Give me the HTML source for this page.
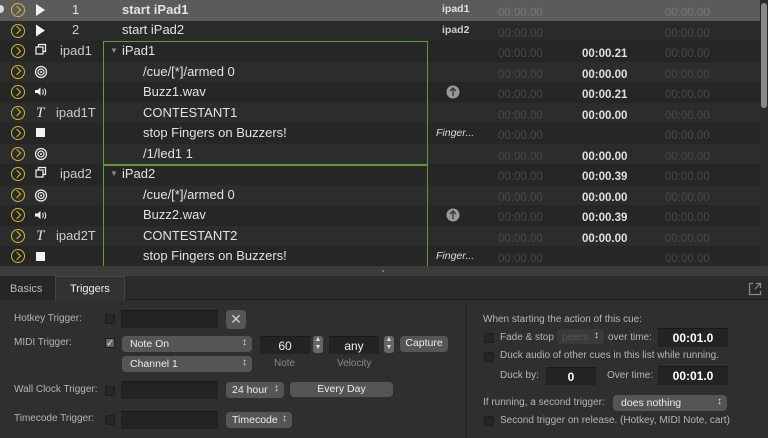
<!DOCTYPE html>
<html><head><style>
*{margin:0;padding:0;box-sizing:border-box}
body{width:768px;height:438px;overflow:hidden;background:#2f2f2f;font-family:"Liberation Sans",sans-serif;position:relative}
.a{position:absolute;white-space:nowrap}
.row{position:absolute;left:0;width:760px;height:20.5px}
.t{color:#e2e2e2;font-size:13px}
.d{color:#484848;font-size:11.5px}
.b{color:#e0e0e0;font-size:11.5px;font-weight:bold}
.l{color:#b5b5b5;font-size:10px}
.cb{position:absolute;width:10px;height:10px;background:#262626;border:1px solid #1c1c1c;border-radius:2px}
.fld{position:absolute;background:#232323;border-top:1px solid #1a1a1a}
.pop{position:absolute;background:#555;border-radius:4px;color:#eee;font-size:10.5px;padding:2px 0 0 8px;height:16px}
.pop:after{content:"\2195";position:absolute;right:5px;top:1px;font-size:10px;color:#ddd}
.btn{position:absolute;background:#555;border-radius:4px;color:#eee;font-size:10.5px;text-align:center;padding-top:2px;height:17px}
.go{position:absolute;left:11px;width:14px;height:14px;border:1.5px solid #c9b936;border-radius:50%}
.go:after{content:"";position:absolute;left:2px;top:2.5px;width:5px;height:5px;border-right:1.5px solid #c9b936;border-bottom:1.5px solid #c9b936;transform:rotate(-45deg)}
</style></head><body>
<div class="a" style="left:0;top:0;width:768px;height:266px;background:#282828"></div>
<div class="row" style="top:0;background:#5b5b5b"></div>
<div class="row" style="top:20.5px;background:#2a2a2a"></div>
<div class="row" style="top:41px;background:#262626"></div>
<div class="row" style="top:61.5px;background:#2c2c2c"></div>
<div class="row" style="top:82px;background:#262626"></div>
<div class="row" style="top:102.5px;background:#2c2c2c"></div>
<div class="row" style="top:123px;background:#262626"></div>
<div class="row" style="top:143.5px;background:#2c2c2c"></div>
<div class="row" style="top:164px;background:#262626"></div>
<div class="row" style="top:184.5px;background:#2c2c2c"></div>
<div class="row" style="top:205px;background:#262626"></div>
<div class="row" style="top:225.5px;background:#2c2c2c"></div>
<div class="row" style="top:246px;background:#262626"></div>
<div class="a" style="left:760px;top:0;width:8px;height:266px;background:#2b2b2b"></div>
<div class="a" style="left:761px;top:3px;width:6px;height:105px;background:#8a8a8a;border-radius:3px"></div>
<div class="a" style="left:103px;top:41px;width:325px;height:124px;border:1px solid #5f9a3c"></div>
<div class="a" style="left:103px;top:165px;width:325px;height:105px;border:1px solid #5f9a3c;border-bottom:none"></div>
<div class="a" style="left:0;top:5px;width:4px;height:8px;background:#ddd;border-radius:0 4px 4px 0"></div>
<div class="go" style="top:3px"></div><div class="go" style="top:23.5px"></div><div class="go" style="top:44px"></div>
<div class="go" style="top:64.5px"></div><div class="go" style="top:85px"></div><div class="go" style="top:105.5px"></div>
<div class="go" style="top:126px"></div><div class="go" style="top:146.5px"></div><div class="go" style="top:167px"></div>
<div class="go" style="top:187.5px"></div><div class="go" style="top:208px"></div><div class="go" style="top:228.5px"></div>
<div class="go" style="top:249px"></div>
<svg class="a" style="left:30px;top:0" width="20" height="266" fill="#f2f2f2" stroke="#f2f2f2">
<path d="M6 4l9 6-9 6z" stroke="none"/><path d="M6 24.5l9 6-9 6z" stroke="none"/>
<rect x="6" y="47" width="7" height="7" fill="none" stroke-width="1.2"/><path d="M8.5 47v-2.5h7v7h-2.5" fill="none" stroke-width="1.2"/>
<circle cx="11" cy="72" r="5.5" fill="none" stroke-width="1.2"/><circle cx="11" cy="72" r="3" fill="none" stroke-width="1.2"/><circle cx="11" cy="72" r="1" stroke="none"/>
<path d="M5 90h2.5l3-2.5v8l-3-2.5H5z" stroke="none"/><path d="M12.5 89.5q1.5 2.5 0 5M14.5 88.5q2.5 3.5 0 7" fill="none" stroke-width="1"/>
<rect x="6" y="128" width="9" height="9" stroke="none"/>
<circle cx="11" cy="154" r="5.5" fill="none" stroke-width="1.2"/><circle cx="11" cy="154" r="3" fill="none" stroke-width="1.2"/><circle cx="11" cy="154" r="1" stroke="none"/>
<rect x="6" y="170" width="7" height="7" fill="none" stroke-width="1.2"/><path d="M8.5 170v-2.5h7v7h-2.5" fill="none" stroke-width="1.2"/>
<circle cx="11" cy="195.5" r="5.5" fill="none" stroke-width="1.2"/><circle cx="11" cy="195.5" r="3" fill="none" stroke-width="1.2"/><circle cx="11" cy="195.5" r="1" stroke="none"/>
<path d="M5 213.5h2.5l3-2.5v8l-3-2.5H5z" stroke="none"/><path d="M12.5 213q1.5 2.5 0 5M14.5 212q2.5 3.5 0 7" fill="none" stroke-width="1"/>
<rect x="6" y="252" width="9" height="9" stroke="none"/>
</svg>
<div class="a t" style="left:36px;top:105px;font-family:'Liberation Serif',serif;font-style:italic;font-size:15px">T</div>
<div class="a t" style="left:36px;top:228px;font-family:'Liberation Serif',serif;font-style:italic;font-size:15px">T</div>
<div class="a t" style="left:72px;top:2px">1</div>
<div class="a t" style="left:72px;top:22px;color:#ccc">2</div>
<div class="a t" style="left:60px;top:43px;color:#ccc">ipad1</div>
<div class="a t" style="left:56px;top:105px;color:#ccc">ipad1T</div>
<div class="a t" style="left:60px;top:166px;color:#ccc">ipad2</div>
<div class="a t" style="left:56px;top:228px;color:#ccc">ipad2T</div>
<div class="a t" style="left:122px;top:2px;font-weight:bold">start iPad1</div>
<div class="a t" style="left:122px;top:22px">start iPad2</div>
<div class="a" style="left:110px;top:46px;color:#888;font-size:8px">▼</div>
<div class="a t" style="left:122px;top:43px">iPad1</div>
<div class="a t" style="left:143px;top:64px">/cue/[*]/armed 0</div>
<div class="a t" style="left:143px;top:84px">Buzz1.wav</div>
<div class="a t" style="left:143px;top:105px">CONTESTANT1</div>
<div class="a t" style="left:143px;top:125px">stop Fingers on Buzzers!</div>
<div class="a t" style="left:143px;top:146px">/1/led1 1</div>
<div class="a" style="left:110px;top:169px;color:#888;font-size:8px">▼</div>
<div class="a t" style="left:122px;top:166px">iPad2</div>
<div class="a t" style="left:143px;top:187px">/cue/[*]/armed 0</div>
<div class="a t" style="left:143px;top:207px">Buzz2.wav</div>
<div class="a t" style="left:143px;top:228px">CONTESTANT2</div>
<div class="a t" style="left:143px;top:248px">stop Fingers on Buzzers!</div>
<div class="a b" style="left:442px;top:3px;font-size:10.5px">ipad1</div>
<div class="a b" style="left:442px;top:24px;font-size:10.5px;color:#ccc">ipad2</div>
<div class="a b" style="left:436px;top:127px;font-size:10.5px;font-style:italic;font-weight:normal;color:#ddd">Finger...</div>
<div class="a b" style="left:436px;top:250px;font-size:10.5px;font-style:italic;font-weight:normal;color:#ddd">Finger...</div>
<svg class="a" style="left:446px;top:85px" width="16" height="140"><circle cx="7" cy="7" r="6.5" fill="#999"/><path d="M7 11V3M4 6l3-3 3 3" stroke="#333" stroke-width="1.3" fill="none"/><circle cx="7" cy="130" r="6.5" fill="#999"/><path d="M7 134v-8M4 129l3-3 3 3" stroke="#333" stroke-width="1.3" fill="none"/></svg>
<div class="a" style="left:498px;top:3px;line-height:20.5px" >
<div class="d" style="height:20.5px;color:#777">00:00.00</div><div class="d" style="height:20.5px">00:00.00</div><div class="d" style="height:20.5px">00:00.00</div><div class="d" style="height:20.5px">00:00.00</div><div class="d" style="height:20.5px">00:00.00</div><div class="d" style="height:20.5px">00:00.00</div><div class="d" style="height:20.5px">00:00.00</div><div class="d" style="height:20.5px">00:00.00</div><div class="d" style="height:20.5px">00:00.00</div><div class="d" style="height:20.5px">00:00.00</div><div class="d" style="height:20.5px">00:00.00</div><div class="d" style="height:20.5px">00:00.00</div><div class="d" style="height:20.5px">00:00.00</div></div>
<div class="a" style="left:665px;top:3px;line-height:20.5px">
<div class="d" style="height:20.5px;color:#777">00:00.00</div><div class="d" style="height:20.5px">00:00.00</div><div class="d" style="height:20.5px">00:00.00</div><div class="d" style="height:20.5px">00:00.00</div><div class="d" style="height:20.5px">00:00.00</div><div class="d" style="height:20.5px">00:00.00</div><div class="d" style="height:20.5px">00:00.00</div><div class="d" style="height:20.5px">00:00.00</div><div class="d" style="height:20.5px">00:00.00</div><div class="d" style="height:20.5px">00:00.00</div><div class="d" style="height:20.5px">00:00.00</div><div class="d" style="height:20.5px">00:00.00</div><div class="d" style="height:20.5px">00:00.00</div></div>
<div class="a" style="left:582px;top:44px;line-height:20.5px">
<div class="b" style="height:20.5px">00:00.21</div><div class="b" style="height:20.5px">00:00.00</div><div class="b" style="height:20.5px">00:00.21</div><div class="b" style="height:20.5px">00:00.00</div><div class="b" style="height:20.5px"></div><div class="b" style="height:20.5px">00:00.00</div><div class="b" style="height:20.5px">00:00.39</div><div class="b" style="height:20.5px">00:00.00</div><div class="b" style="height:20.5px">00:00.39</div><div class="b" style="height:20.5px">00:00.00</div></div>
<div class="a" style="left:0;top:266px;width:768px;height:10px;background:#3c3c3c"></div>
<div class="a" style="left:382px;top:270px;width:2px;height:2px;background:#777"></div>
<div class="a" style="left:0;top:276px;width:768px;height:24px;background:#2b2b2b;border-bottom:1px solid #1e1e1e"></div>
<div class="a" style="left:0;top:276px;width:55px;height:24px;background:#262626;color:#bbb;font-size:11px;padding:7px 0 0 10px">Basics</div>
<div class="a" style="left:55px;top:276px;width:70px;height:25px;background:#323232;border:1px solid #444;border-bottom:none;color:#eee;font-size:11px;padding:6px 0 0 14px">Triggers</div>
<svg class="a" style="left:748px;top:282px" width="14" height="14" fill="none" stroke="#888" stroke-width="1.2"><path d="M5 1.5H1.5v11h11V9M7 7l5.5-5.5M8 1.5h4.5V6"/></svg>
<div class="a" style="left:466px;top:301px;width:1px;height:137px;background:#222"></div>
<div class="a l" style="left:14px;top:313px">Hotkey Trigger:</div>
<div class="cb" style="left:105px;top:314px"></div>
<div class="fld" style="left:121px;top:310px;width:97px;height:18px"></div>
<div class="btn" style="left:226px;top:310px;width:20px;height:19px;font-size:14px;color:#ccc;padding-top:1px">✕</div>
<div class="a l" style="left:14px;top:337px">MIDI Trigger:</div>
<div class="cb" style="left:105px;top:338px;background:#666;color:#eee;font-size:9px;line-height:8px;text-align:center">✓</div>
<div class="pop" style="left:122px;top:336px;width:130px">Note On</div>
<div class="fld" style="left:260px;top:336px;width:50px;height:18px;color:#eee;font-size:12px;text-align:center;padding-top:2px">60</div>
<div class="a" style="left:313px;top:336px;width:10px;height:17px;background:#666;border-radius:3px;color:#ddd;font-size:7px;line-height:8px;text-align:center">▲<br>▼</div>
<div class="fld" style="left:329px;top:336px;width:50px;height:18px;color:#eee;font-size:12px;text-align:center;padding-top:2px">any</div>
<div class="a" style="left:384px;top:336px;width:10px;height:17px;background:#666;border-radius:3px;color:#ddd;font-size:7px;line-height:8px;text-align:center">▲<br>▼</div>
<div class="btn" style="left:400px;top:336px;width:48px;height:16px;padding-top:1px">Capture</div>
<div class="pop" style="left:122px;top:356px;width:130px">Channel 1</div>
<div class="a l" style="left:274px;top:358px;color:#888">Note</div>
<div class="a l" style="left:337px;top:358px;color:#888">Velocity</div>
<div class="a l" style="left:14px;top:384px">Wall Clock Trigger:</div>
<div class="cb" style="left:105px;top:386px"></div>
<div class="fld" style="left:121px;top:381px;width:97px;height:18px"></div>
<div class="pop" style="left:226px;top:382px;width:58px;padding-left:6px">24 hour</div>
<div class="btn" style="left:290px;top:382px;width:103px;height:15px;padding-top:1px">Every Day</div>
<div class="a l" style="left:14px;top:413px">Timecode Trigger:</div>
<div class="cb" style="left:105px;top:415px"></div>
<div class="fld" style="left:121px;top:411px;width:97px;height:18px"></div>
<div class="pop" style="left:226px;top:412px;width:66px;padding-left:6px">Timecode</div>
<div class="a l" style="left:483px;top:314px">When starting the action of this cue:</div>
<div class="cb" style="left:484px;top:333px"></div>
<div class="a l" style="left:500px;top:332px">Fade &amp; stop</div>
<div class="pop" style="left:557px;top:329px;width:47px;height:15px;background:#3a3a3a;color:#555;padding-left:5px">peers</div>
<div class="a l" style="left:608px;top:332px">over time:</div>
<div class="fld" style="left:658px;top:328px;width:70px;height:19px;color:#fff;font-size:12px;font-weight:bold;text-align:center;padding-top:2px">00:01.0</div>
<div class="cb" style="left:484px;top:352px"></div>
<div class="a l" style="left:500px;top:350px">Duck audio of other cues in this list while running.</div>
<div class="a l" style="left:500px;top:370px">Duck by:</div>
<div class="fld" style="left:546px;top:367px;width:50px;height:18px;color:#fff;font-size:12px;font-weight:bold;text-align:center;padding-top:2px">0</div>
<div class="a l" style="left:607px;top:370px">Over time:</div>
<div class="fld" style="left:658px;top:366px;width:70px;height:19px;color:#fff;font-size:12px;font-weight:bold;text-align:center;padding-top:2px">00:01.0</div>
<div class="a l" style="left:483px;top:397px">If running, a second trigger:</div>
<div class="pop" style="left:613px;top:395px;width:114px">does nothing</div>
<div class="cb" style="left:484px;top:416px"></div>
<div class="a l" style="left:500px;top:415px">Second trigger on release. (Hotkey, MIDI Note, cart)</div>
</body></html>
